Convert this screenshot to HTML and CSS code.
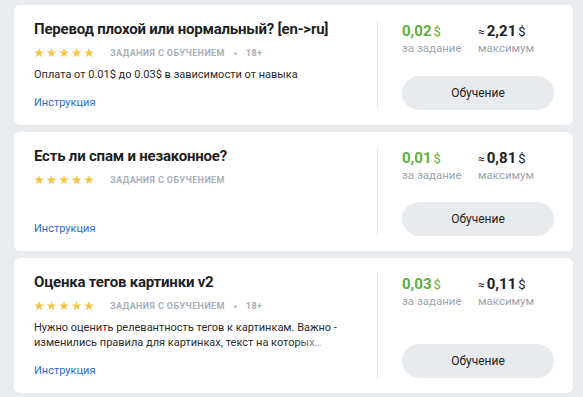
FILE: index.html
```html
<!DOCTYPE html>
<html lang="ru">
<head>
  <meta charset="UTF-8" />
  <meta name="viewport" content="width=device-width, initial-scale=1.0" />
  <title>Задания</title>
  <link rel="stylesheet" href="styles.css">
</head>
<body>

  <svg class="defs" width="0" height="0">
    <symbol id="star" viewBox="0 0 10 10">
      <polygon points="5,0 6.2,3.4 9.8,3.5 6.9,5.7 7.9,9.2 5,7.1 2.1,9.2 3.1,5.7 0.2,3.5 3.8,3.4" />
    </symbol>
  </svg>

  <div class="list">

    <div class="card">
      <div class="info">
        <h2 class="title">Перевод плохой или нормальный? [en-&gt;ru]</h2>
        <div class="meta">
          <svg class="stars" width="60" height="10" viewBox="0 0 60 10">
            <use href="#star" x="0" width="10" height="10" />
            <use href="#star" x="12.5" width="10" height="10" />
            <use href="#star" x="25" width="10" height="10" />
            <use href="#star" x="37.5" width="10" height="10" />
            <use href="#star" x="50" width="10" height="10" />
          </svg>
          <span class="tag">Задания с обучением</span>
          <span class="dot"></span>
          <span class="tag">18+</span>
        </div>
        <p class="desc">Оплата от 0.01$ до 0.03$ в зависимости от навыка</p>
        <a class="link" href="#">Инструкция</a>
      </div>
      <div class="side">
        <div class="prices">
          <div class="price first">
            <div class="sum green">0,02<span class="cur">$</span></div>
            <div class="label">за задание</div>
          </div>
          <div class="price">
            <div class="sum"><span class="approx">≈</span>2,21<span class="cur">$</span></div>
            <div class="label">максимум</div>
          </div>
        </div>
        <button class="btn">Обучение</button>
      </div>
    </div>

    <div class="card">
      <div class="info">
        <h2 class="title">Есть ли спам и незаконное?</h2>
        <div class="meta">
          <svg class="stars" width="60" height="10" viewBox="0 0 60 10">
            <use href="#star" x="0" width="10" height="10" />
            <use href="#star" x="12.5" width="10" height="10" />
            <use href="#star" x="25" width="10" height="10" />
            <use href="#star" x="37.5" width="10" height="10" />
            <use href="#star" x="50" width="10" height="10" />
          </svg>
          <span class="tag">Задания с обучением</span>
        </div>
        <a class="link" href="#">Инструкция</a>
      </div>
      <div class="side">
        <div class="prices">
          <div class="price first">
            <div class="sum green">0,01<span class="cur">$</span></div>
            <div class="label">за задание</div>
          </div>
          <div class="price">
            <div class="sum"><span class="approx">≈</span>0,81<span class="cur">$</span></div>
            <div class="label">максимум</div>
          </div>
        </div>
        <button class="btn">Обучение</button>
      </div>
    </div>

    <div class="card">
      <div class="info">
        <h2 class="title">Оценка тегов картинки v2</h2>
        <div class="meta">
          <svg class="stars" width="60" height="10" viewBox="0 0 60 10">
            <use href="#star" x="0" width="10" height="10" />
            <use href="#star" x="12.5" width="10" height="10" />
            <use href="#star" x="25" width="10" height="10" />
            <use href="#star" x="37.5" width="10" height="10" />
            <use href="#star" x="50" width="10" height="10" />
          </svg>
          <span class="tag">Задания с обучением</span>
          <span class="dot"></span>
          <span class="tag">18+</span>
        </div>
        <p class="desc clamp">Нужно оценить релевантность тегов к картинкам. Важно - изменились правила для картинках, текст на которых нельзя прочитать, теперь их нужно оценивать иначе</p>
        <a class="link" href="#">Инструкция</a>
      </div>
      <div class="side">
        <div class="prices">
          <div class="price first">
            <div class="sum green">0,03<span class="cur">$</span></div>
            <div class="label">за задание</div>
          </div>
          <div class="price">
            <div class="sum"><span class="approx">≈</span>0,11<span class="cur">$</span></div>
            <div class="label">максимум</div>
          </div>
        </div>
        <button class="btn">Обучение</button>
      </div>
    </div>

  </div>

</body>
</html>
```

FILE: styles.css
```css
body {
  font-family: 'Roboto', 'Liberation Sans', sans-serif;
  background: #e9ecef;
  color: #222;
  margin: 0;
  padding: 5px 10px 0 14px;
}
.defs {
  position: absolute;
}
.list {
  display: flex;
  flex-direction: column;
  gap: 7px;
}
.card {
  display: flex;
  background: white;
  border-radius: 6px;
  padding: 14px 0 15px;
  min-height: 90px;
}
.info {
  flex: 1;
  display: flex;
  flex-direction: column;
  padding: 0 32px 0 20px;
}
.title {
  margin: 0;
  font-size: 15px;
  line-height: 20px;
  font-weight: 700;
  letter-spacing: -0.2px;
  color: #1f1f1f;
}
.meta {
  display: flex;
  align-items: center;
  margin-top: 7px;
  height: 14px;
}
.stars {
  fill: #f6c443;
  margin-right: 16px;
}
.tag {
  color: #a9b0b9;
  font-size: 9px;
  font-weight: 700;
  text-transform: uppercase;
  letter-spacing: 0.4px;
}
.dot {
  width: 3px;
  height: 3px;
  border-radius: 50%;
  background: #b6bcc4;
  margin: 0 9px;
}
.desc {
  position: relative;
  margin: 7px 0 13px;
  font-size: 11px;
  line-height: 15px;
  color: #2b2b2b;
}
.clamp {
  display: -webkit-box;
  -webkit-line-clamp: 2;
  -webkit-box-orient: vertical;
  overflow: hidden;
}
.clamp::after {
  content: "";
  position: absolute;
  right: 0;
  bottom: 0;
  width: 50px;
  height: 15px;
  background: linear-gradient(to right, rgba(255,255,255,0), white 85%);
}
.link {
  margin-top: auto;
  font-size: 11px;
  line-height: 15px;
  color: #2b6ccf;
  text-decoration: none;
}
.side {
  width: 152px;
  display: flex;
  flex-direction: column;
  justify-content: space-between;
  border-left: 1px solid #e8eaed;
  padding: 0 19px 0 24px;
}
.prices {
  display: flex;
  margin-top: 3px;
}
.first {
  width: 76px;
}
.sum {
  font-size: 15px;
  font-weight: 700;
  line-height: 18px;
}
.green {
  color: #5fad3e;
}
.cur {
  font-weight: 400;
  font-size: 13px;
  margin-left: 2px;
}
.approx {
  font-weight: 400;
  font-size: 12px;
  margin-right: 2px;
}
.label {
  font-size: 11.5px;
  line-height: 15px;
  color: #9ea4ab;
}
.btn {
  width: 152px;
  height: 34px;
  border: none;
  border-radius: 17px;
  background: #e8ebee;
  color: #222;
  font-family: inherit;
  font-size: 12px;
  cursor: pointer;
}
```
